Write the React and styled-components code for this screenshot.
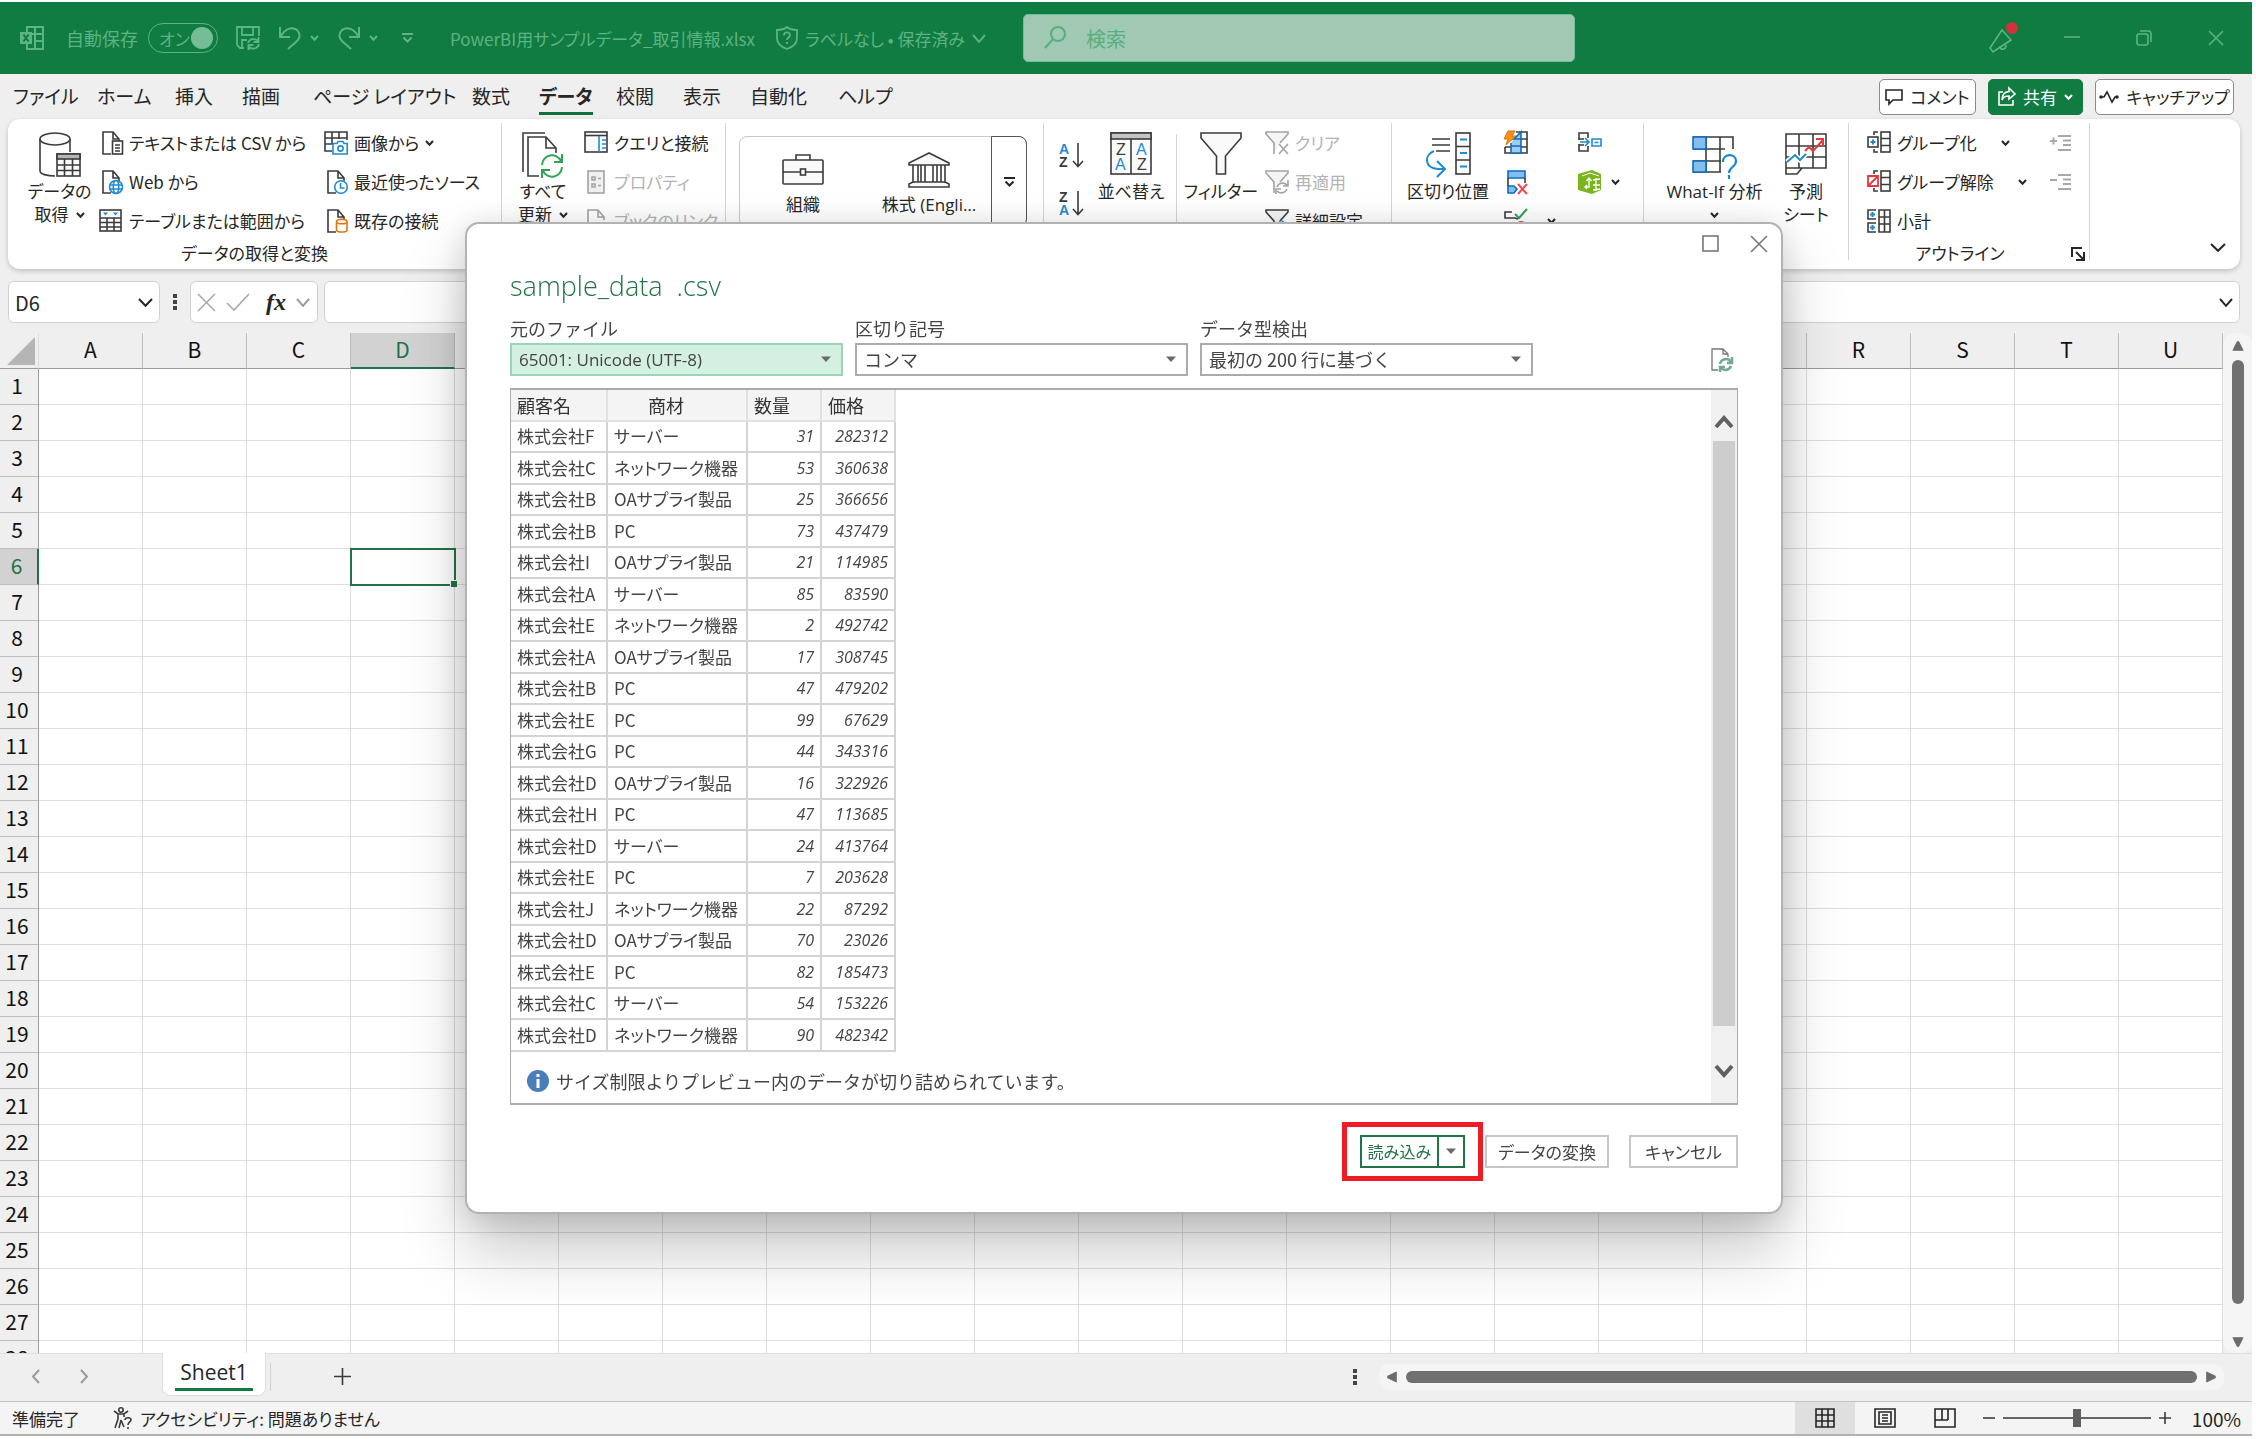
import { useState } from "react";
import styled, { createGlobalStyle, css } from "styled-components";

const green = "#107c41";
const titleInk = "#5cb384";
const ink = "#262626";
const line = "#3b3b3b";
const blue = "#1e8ad2";
const jp = `"Noto Sans CJK JP", "Noto Sans", sans-serif`;
const latin = `"Open Sans", "Noto Sans CJK JP", sans-serif`;

const columns = "ABCDEFGHIJKLMNOPQRSTU".split("");
const rowNumbers = Array.from({ length: 28 }, (_, i) => i + 1);

const previewRows = [
  ["株式会社F", "サーバー", 31, 282312],
  ["株式会社C", "ネットワーク機器", 53, 360638],
  ["株式会社B", "OAサプライ製品", 25, 366656],
  ["株式会社B", "PC", 73, 437479],
  ["株式会社I", "OAサプライ製品", 21, 114985],
  ["株式会社A", "サーバー", 85, 83590],
  ["株式会社E", "ネットワーク機器", 2, 492742],
  ["株式会社A", "OAサプライ製品", 17, 308745],
  ["株式会社B", "PC", 47, 479202],
  ["株式会社E", "PC", 99, 67629],
  ["株式会社G", "PC", 44, 343316],
  ["株式会社D", "OAサプライ製品", 16, 322926],
  ["株式会社H", "PC", 47, 113685],
  ["株式会社D", "サーバー", 24, 413764],
  ["株式会社E", "PC", 7, 203628],
  ["株式会社J", "ネットワーク機器", 22, 87292],
  ["株式会社D", "OAサプライ製品", 70, 23026],
  ["株式会社E", "PC", 82, 185473],
  ["株式会社C", "サーバー", 54, 153226],
  ["株式会社D", "ネットワーク機器", 90, 482342],
];

const GlobalStyle = createGlobalStyle`
  * {
    box-sizing: border-box;
  }
  body {
    margin: 0;
    background: #fff;
    color: ${ink};
    font-family: ${jp};
    font-size: 18px;
    font-feature-settings: "palt";
  }
  button, input, select {
    margin: 0;
    padding: 0;
    border: 0;
    background: none;
    color: inherit;
    font: inherit;
    font-feature-settings: inherit;
  }
  button {
    cursor: pointer;
    white-space: nowrap;
  }
  svg {
    display: block;
    flex: none;
    overflow: visible;
  }
`;

/* ---------- icons ---------- */

const Icon = ({ w = 24, h = 24, color = line, sw = 1.6, children }) => (
  <svg
    width={w}
    height={h}
    viewBox={`0 0 ${w} ${h}`}
    fill="none"
    stroke={color}
    strokeWidth={sw}
    aria-hidden="true"
  >
    {children}
  </svg>
);

const Chevron = ({ w = 9, h = 6, color = ink, sw = 2 }) => (
  <Icon w={w} h={h} color={color} sw={sw}>
    <path d={`M1 1L${w / 2} ${h - 1.2}L${w - 1} 1`} />
  </Icon>
);

const Triangle = ({ dir = "down", color = "#6b6b6b", size = 10 }) => {
  const turn = { down: 0, left: 90, up: 180, right: 270 }[dir];
  return (
    <svg width={size} height={size} viewBox="0 0 10 10" aria-hidden="true">
      <path
        d="M1 1.500H9L5.500 8.500h-1z"
        fill={color}
        stroke={color}
        strokeLinejoin="round"
        transform={`rotate(${turn} 5 5)`}
      />
    </svg>
  );
};

const ExcelIcon = () => (
  <Icon color={titleInk} sw={2}>
    <path d="M7 6V1h16v22H7v-5M15 1v22M7 8h16M15 15h8M7 1" />
    <rect x="0" y="6" width="12" height="12" fill={titleInk} stroke="none" />
    <path d="M3.500 8.500l5 7M8.500 8.500l-5 7" stroke={green} />
  </Icon>
);

const SaveIcon = () => (
  <Icon color={titleInk} sw={1.8}>
    <path d="M8 22H4L1 19V1h22v9M6 1v8h11V1M6 22v-8h5" />
    <path d="M12 17a6 6 0 0 1 10-2M22.500 11v5h-5M23 18a6 6 0 0 1-10 3M12.500 24v-5h5" />
  </Icon>
);

const UndoIcon = ({ flip }) => (
  <Icon color={titleInk} sw={2}>
    <g transform={flip ? "matrix(-1 0 0 1 24 0)" : undefined}>
      <path d="M2 1v10h10M2.500 10.500C7 3 14 0 19 4c4 4 3 8 0 11l-9 8" />
    </g>
  </Icon>
);

const ShieldIcon = () => (
  <Icon w={22} color={titleInk} sw={1.8}>
    <path d="M11 1c3 2.500 6 3 10 3v8c0 5-4 9-10 11C5 21 1 17 1 12V4c4 0 7-.5 10-3z" />
    <path d="M8 9.500c0-4 6-4 6-.5 0 2.500-3 2.500-3 5M11 16v2" />
  </Icon>
);

const SearchIcon = () => (
  <Icon w={22} color="#55b080" sw={2}>
    <circle cx="14" cy="8" r="7" />
    <path d="M9 13L1 22" />
  </Icon>
);

const MegaphoneIcon = () => (
  <Icon w={28} h={32} color={titleInk} sw={1.6}>
    <path d="M16 8L4 26l3 4 18-12zM14 24c0 5 6 4 6-1" />
    <circle cx="26" cy="6" r="6" fill="#d13438" stroke="none" />
  </Icon>
);

const DatabaseIcon = () => (
  <Icon w={42} h={46}>
    <path d="M1 7v32c0 3 7 5 15 5" />
    <path d="M31 7v13" />
    <ellipse cx="16" cy="7" rx="15" ry="6" fill="#fafafa" />
    <rect x="18" y="22" width="23" height="22" fill="#fafafa" />
    <rect x="18" y="22" width="23" height="5" fill="#b5b5b5" />
    <path d="M18 33h23M18 38.500h23M25.500 27v17M33.500 27v17" />
  </Icon>
);

const PageShape = ({ color = line }) => (
  <path d="M9 23H1V1h10l6 7v3M11 1v7h6" stroke={color} />
);

const TextFileIcon = () => (
  <Icon>
    <g transform="translate(3)">
      <PageShape />
      <rect x="10.500" y="10" width="10" height="13" fill="#fff" />
      <path d="M13 14h5M13 17h5M13 20h5" />
    </g>
  </Icon>
);

const WebFileIcon = () => (
  <Icon>
    <g transform="translate(3)">
      <PageShape />
      <g stroke={blue}>
        <circle cx="14" cy="17" r="6.500" fill="#fff" />
        <ellipse cx="14" cy="17" rx="2.700" ry="6.500" />
        <path d="M8 15h12M8 19h12" />
      </g>
    </g>
  </Icon>
);

const TableIcon = () => (
  <Icon>
    <rect x="1" y="1" width="21" height="21" fill="#fafafa" />
    <path d="M1 9h21M1 13.500h21M1 18h21M8 9v13M15 9v13" />
    <path d="M4 3.500h5L6.500 6.500zM14 3.500h5l-2.500 3z" fill={blue} stroke="none" />
  </Icon>
);

const PictureIcon = () => (
  <Icon>
    <path d="M8 20H1V1h22v8M1 7h22M1 13h8M8 1v12M15 1v7" />
    <path d="M9 12.500h4l1-2h5l1 2h3.200V23H9z" fill="#fff" stroke={blue} />
    <circle cx="16.500" cy="17.500" r="2.600" stroke={blue} />
  </Icon>
);

const RecentIcon = () => (
  <Icon>
    <g transform="translate(3)">
      <PageShape />
      <g stroke={blue}>
        <circle cx="14" cy="17" r="6.300" fill="#fff" />
        <path d="M13.500 13v5h4" />
      </g>
    </g>
  </Icon>
);

const ConnectionIcon = () => (
  <Icon>
    <g transform="translate(3)">
      <PageShape />
      <g stroke="#e2740c" fill="#fff">
        <path d="M9.500 12.500v8.500c0 2.700 10.500 2.700 10.500 0v-8.500" />
        <ellipse cx="14.800" cy="12.500" rx="5.200" ry="2.300" />
      </g>
    </g>
  </Icon>
);

const RefreshAllIcon = () => (
  <Icon w={42} h={46}>
    <path d="M1 40V1h22M17 44H6V5h18l10 11v5M24 5v11h10" />
    <g stroke="#31a354" strokeWidth="2">
      <path d="M20 33a10 10 0 0 1 19-4M40 22v8h-8M40 35a10 10 0 0 1-19 4M20 46v-8h8" />
    </g>
  </Icon>
);

const QueriesIcon = () => (
  <Icon>
    <rect x="1" y="1" width="22" height="20" fill="#fafafa" />
    <path d="M1 4.500h22" />
    <path d="M15 5v16M18 9h4M18 13h4M18 17h4" stroke={blue} />
  </Icon>
);

const PropertiesIcon = () => (
  <Icon color="#a3a3a3">
    <rect x="4" y="1" width="16" height="22" fill="#f0f0f0" />
    <path d="M8 7h3v3H8zM8 14h3v3H8zM14 8.500h3M14 15.500h3" />
  </Icon>
);

const LinkFileIcon = () => (
  <Icon color="#a3a3a3">
    <g transform="translate(3)">
      <PageShape color="#a3a3a3" />
      <rect x="6" y="14" width="14" height="7" rx="3.500" fill="#fff" />
    </g>
  </Icon>
);

const BriefcaseIcon = () => (
  <Icon w={42} h={36}>
    <rect x="1" y="8" width="40" height="24" rx="1" fill="#fafafa" />
    <path d="M14 8V3h14v5M1 20h18M24 20h17" />
    <rect x="18.500" y="17" width="5" height="6" />
  </Icon>
);

const BankIcon = () => (
  <Icon w={42} h={36}>
    <path d="M21 1L1 11v2h40v-2zM5 13v18M37 13v18M1 35v-3l4-2h32l4 2v3z" fill="#fafafa" />
    <path d="M13 13v17M17 13v17M25 13v17M29 13v17M10 13v17M33 13v17" />
  </Icon>
);

const SvgText = ({ x, y, size = 17, weight = 400, fill = line, children }) => (
  <text
    x={x}
    y={y}
    fontSize={size}
    fontFamily="Liberation Sans, sans-serif"
    fontWeight={weight}
    fill={fill}
    stroke="none"
  >
    {children}
  </text>
);

const SortIcon = ({ down }) => (
  <Icon w={26} h={28}>
    <SvgText x={1} y={13} size={14} weight={700} fill={down ? line : blue}>{down ? "Z" : "A"}</SvgText>
    <SvgText x={1} y={26} size={14} weight={700} fill={down ? blue : line}>{down ? "A" : "Z"}</SvgText>
    <path d="M20 2v23M15 20l5 5.500 5-5.500" />
  </Icon>
);

const SortDialogIcon = () => (
  <Icon w={42} h={46}>
    <rect x="1" y="1" width="40" height="41" fill="#fafafa" />
    <rect x="1" y="1" width="40" height="6" fill="#c4c4c4" />
    <path d="M21 7v35" />
    <SvgText x={6} y={23} size={16}>Z</SvgText>
    <SvgText x={5} y={38} size={16} fill={blue}>A</SvgText>
    <SvgText x={26} y={23} size={16} fill={blue}>A</SvgText>
    <SvgText x={27} y={38} size={16}>Z</SvgText>
  </Icon>
);

const FilterIcon = () => (
  <Icon w={42} h={46}>
    <path d="M1 1h40v5L25.500 24v18h-9V24L1 6z" fill="#fafafa" />
  </Icon>
);

const SmallFilter = ({ color = "#a3a3a3", children }) => (
  <Icon color={color}>
    <path d="M9 23V12L1 3V1h22v2l-8 9" fill="#f5f5f5" />
    {children}
  </Icon>
);

const TextColumnsIcon = () => (
  <Icon w={46} h={46}>
    <path d="M7 7h18M7 13h18M11 19h14" />
    <rect x="31" y="1" width="14" height="41" fill="#fafafa" />
    <path d="M31 14.500h14M31 28h14" />
    <g stroke={blue} strokeWidth="2">
      <path d="M35 7.500h7M35 21h7M35 34.500h7M9 19c-10 4-10 17 4 18h6M12 29l8 8-8 8" />
    </g>
  </Icon>
);

const FlashFillIcon = () => (
  <Icon>
    <path d="M12 1h11v21H1v-6M1 16h22M12 8h11" />
    <path d="M10 8l7-7v21H7V12" fill="#9fcbee" stroke="#0f6cbd" />
    <path d="M7 15h10M7 8h10" stroke="#0f6cbd" />
    <path d="M4 0h7L8 5h4L2 14l2-6H0z" fill="#f7901e" stroke="#d9730d" strokeWidth="1" />
  </Icon>
);

const DuplicatesIcon = () => (
  <Icon>
    <path d="M4 1h17v7H4zM4 16h6l3 3-3 4H4z" fill="#83beec" stroke="#0f6cbd" />
    <path d="M4 8v8M21 8v5" />
    <path d="M14 14l9 10M23 14l-9 10" stroke="#f0484c" strokeWidth="2" />
  </Icon>
);

const ValidationIcon = () => (
  <Icon>
    <path d="M8 3H1v6h10l3 1M9 16H1v6h7" />
    <path d="M11 5l4 4 8-9" stroke="#31a354" strokeWidth="2" />
    <circle cx="17" cy="18" r="5" stroke="#e8383d" strokeWidth="2" />
  </Icon>
);

const ConsolidateIcon = () => (
  <Icon>
    <path d="M1 9V2h9v5M1 13v7h9v-5M1 8h5M1 14h5" />
    <path d="M2 11h9M7 7l4 4-4 4M14 8h9v7h-9zM16.500 11.500h4" stroke={blue} />
  </Icon>
);

const DataModelIcon = () => (
  <Icon>
    <path d="M0 4L14 0l9 4v16l-9 4-14-4z" fill="#7ab51d" stroke="none" />
    <path d="M4 6l8-3 9 3" stroke="#fff" strokeWidth="1" />
    <path d="M11 9v8H7M8.500 11L11 8l2.500 3M9 15l-2 2 2 2M15 10l7-1M15 15h7M15 20l7-1M18 8v13" stroke="#fff" strokeWidth="1.300" />
  </Icon>
);

const WhatIfIcon = () => (
  <Icon w={46} h={46}>
    <path d="M1 5h40v12M1 17h32M1 29h28M14 5v35M28 5v35M1 40h28" />
    <path d="M1 5h13v12H1zM1 29h13v11H1z" fill="#83beec" stroke="#0f6cbd" />
    <path d="M31 30c0-9 13-9 13-1 0 6-7 6-7 12M37 43v4" stroke={blue} strokeWidth="2.200" />
  </Icon>
);

const ForecastIcon = () => (
  <Icon w={42} h={46}>
    <path d="M1 2h40v34H17l-5 6H1zM1 14h40M1 25h40M1 36h16M14 2v34M28 2v34" />
    <path d="M2 30l8-7 5 5 6-6" stroke="#fff" strokeWidth="5" />
    <path d="M2 30l8-7 5 5 6-6" stroke={blue} strokeWidth="2" />
    <path d="M20 19l4-4 4 4L38 8M31 7h7v8" stroke="#e8383d" strokeWidth="2" />
  </Icon>
);

const GroupIcon = ({ kind }) => (
  <Icon>
    <rect x="14" y="1" width="9" height="20" />
    <path d="M14 7.500h9M14 14.500h9M11 1H7v3M11 21H7v-3" />
    {kind === "group" ? (
      <>
        <rect x="1" y="6" width="10" height="10" />
        <path d="M3.500 11h5M6 8.500v5" stroke={blue} strokeWidth="2" />
      </>
    ) : (
      <path d="M1 6h10v10H1zM1 16L11 6" stroke="#e8383d" strokeWidth="1.800" />
    )}
  </Icon>
);

const SubtotalIcon = () => (
  <Icon>
    <path d="M12 1h11v22H12zM12 8h11M12 15h11M17.500 1v22M9 1H1v9h8M9 14H1v9h8" />
    <path d="M3 5.500h5M5.500 3v5M3 18.500h5M5.500 16v5" stroke={blue} strokeWidth="2" />
  </Icon>
);

const DetailIcon = ({ minus }) => (
  <Icon color="#a8a8a8" sw={2} h={18}>
    <path d="M9 2h13M14 6.500h8M14 11h8M9 16h13M1 7h7" />
    {!minus && <path d="M4.500 3.500v7" />}
  </Icon>
);

const LauncherIcon = () => (
  <Icon w={14} h={14} color={ink} sw={2}>
    <path d="M1 10V1h10M13 5v8H5M5 5l7 7" />
  </Icon>
);

const CommentIcon = () => (
  <Icon w={18} h={18} color={ink}>
    <path d="M1 2h16v10H8l-4 4v-4H1z" />
  </Icon>
);

const ShareIcon = () => (
  <Icon w={18} h={20} color="#fff">
    <path d="M5 5H1v13h14v-5M11 1l6 6-6 5V9c-4 0-6 1-7 4 0-5 2-8 7-8.500z" />
  </Icon>
);

const CatchUpIcon = () => (
  <Icon w={20} h={14} color={ink}>
    <path d="M2 7h3l3-5 5 10 3-5h2" />
    <circle cx="2" cy="7" r="1" fill={ink} />
    <circle cx="18" cy="7" r="1" fill={ink} />
  </Icon>
);

const CrossIcon = ({ size = 16, color, sw = 1.6 }) => (
  <Icon w={size} h={size} color={color} sw={sw}>
    <path d={`M1 1L${size - 1} ${size - 1}M${size - 1} 1L1 ${size - 1}`} />
  </Icon>
);

const RefreshFileIcon = () => (
  <Icon w={22} color="#777" sw={1.3}>
    <path d="M7 22H1V1h11l5 5v3M12 1v5h5" />
    <g stroke="#6fa893" strokeWidth="2.500">
      <path d="M9 16a6 6 0 0 1 11-2M21 9v6h-5M20 18a6 6 0 0 1-10 2M9 24v-5h5" />
    </g>
  </Icon>
);

const AccessibilityIcon = () => (
  <Icon w={22} h={22}>
    <circle cx="9" cy="3" r="2.200" />
    <path d="M2 4l4 3h6l4-3M6 7v5L3 21M12 7v3M9 13l-2 8M13 13c0-3 6-3 6 0 0 2-3 2-3 5M16 20v2M9 13l3 7" />
  </Icon>
);

/* ---------- title bar ---------- */

const Window = styled.div`
  display: flex;
  flex-direction: column;
  height: 100vh;
  padding: 2px 4px 3px 0;
  overflow: hidden;
`;

const TitleBar = styled.header`
  display: flex;
  flex: none;
  align-items: center;
  height: 72px;
  background: ${green};
  color: ${titleInk};
`;

const TitleLeft = styled.div`
  display: flex;
  align-items: center;
  flex: 0 1 1023px;
  padding-left: 20px;
  white-space: nowrap;
`;

const AutoSave = styled.label`
  display: flex;
  align-items: center;
  gap: 10px;
  margin: 0 18px 0 22px;
`;

const Switch = styled.span`
  display: flex;
  align-items: center;
  justify-content: space-between;
  width: 70px;
  height: 30px;
  padding: 0 4px 0 10px;
  border: 1px solid ${titleInk};
  border-radius: 15px;
  font-size: 17px;

  &::after {
    content: "";
    width: 22px;
    height: 22px;
    border-radius: 50%;
    background: #74bd96;
  }
`;

const HiddenCheck = styled.input`
  position: absolute;
  opacity: 0;
`;

const TitleButton = styled.button`
  display: flex;
  align-items: center;
  gap: 8px;
  margin-right: ${(props) => props.$gap || 18}px;
`;

const FileName = styled.span`
  width: 326px;
  font-size: 17px;
`;

const SavedState = styled.button`
  display: flex;
  align-items: center;
  gap: 7px;
  font-size: 17px;
`;

const SearchBox = styled.label`
  display: flex;
  align-items: center;
  gap: 20px;
  flex: 0 1 552px;
  height: 48px;
  padding: 0 20px;
  border: 1px solid #6fc095;
  border-radius: 5px;
  background: #a0c8b2;
  color: #55b080;
  font-size: 20px;

  input {
    flex: 1;
    outline: 0;
  }
  input::placeholder {
    color: inherit;
    opacity: 1;
  }
`;

const WindowButtons = styled.div`
  display: flex;
  flex: 1;
  justify-content: flex-end;

  button {
    display: flex;
    align-items: center;
    justify-content: center;
    width: 72px;
    height: 72px;
  }
`;

const TitleBarView = () => {
  const [autoSave, setAutoSave] = useState(true);
  return (
    <TitleBar>
      <TitleLeft>
        <ExcelIcon />
        <AutoSave>
          自動保存
          <HiddenCheck type="checkbox" checked={autoSave} onChange={() => setAutoSave(!autoSave)} />
          <Switch>{autoSave ? "オン" : "オフ"}</Switch>
        </AutoSave>
        <TitleButton aria-label="上書き保存">
          <SaveIcon />
        </TitleButton>
        <TitleButton aria-label="元に戻す">
          <UndoIcon />
          <Chevron color={titleInk} />
        </TitleButton>
        <TitleButton $gap={24} aria-label="やり直し">
          <UndoIcon flip />
          <Chevron color={titleInk} />
        </TitleButton>
        <TitleButton $gap={37} aria-label="カスタマイズ">
          <Icon w={11} h={10} color={titleInk} sw={2}>
            <path d="M0 1h11M1.500 4.500l4 4 4-4" />
          </Icon>
        </TitleButton>
        <FileName>PowerBI用サンプルデータ_取引情報.xlsx</FileName>
        <SavedState>
          <ShieldIcon />
          ラベルなし • 保存済み
          <Chevron w={14} h={9} color={titleInk} />
        </SavedState>
      </TitleLeft>
      <SearchBox>
        <SearchIcon />
        <input type="search" placeholder="検索" />
      </SearchBox>
      <WindowButtons>
        <button aria-label="新機能">
          <MegaphoneIcon />
        </button>
        <button aria-label="最小化">
          <Icon w={16} h={16} color={titleInk}>
            <path d="M0 7h16" />
          </Icon>
        </button>
        <button aria-label="元のサイズに戻す">
          <Icon w={16} h={16} color={titleInk}>
            <rect x="1" y="4" width="11" height="11" rx="2" />
            <path d="M4 1h8a3 3 0 0 1 3 3v8" />
          </Icon>
        </button>
        <button aria-label="閉じる">
          <CrossIcon color={titleInk} />
        </button>
      </WindowButtons>
    </TitleBar>
  );
};

/* ---------- tabs ---------- */

const TabRow = styled.nav`
  display: flex;
  flex: none;
  align-items: center;
  height: 45px;
  padding: 0 18px 0 13px;
  background: #efefef;
`;

const TabList = styled.div`
  display: grid;
  grid-template-columns: 84px 78px 67px 71px 159px 67px 77px 67px 67px 88px 60px;
  flex: 1;
`;

const Tab = styled.button`
  justify-self: start;
  height: 36px;
  border-bottom: 3px solid transparent;
  font-size: 19px;
  line-height: 33px;
  ${(props) =>
    props.$active &&
    css`
      border-color: #0f703b;
      font-weight: 700;
    `}
`;

const TabActions = styled.div`
  display: flex;
  gap: 12px;
`;

const ActionButton = styled.button`
  display: flex;
  align-items: center;
  justify-content: center;
  gap: 7px;
  width: ${(props) => props.$width}px;
  height: 36px;
  border: 1px solid ${(props) => (props.$primary ? green : "#8a8a8a")};
  border-radius: 5px;
  background: ${(props) => (props.$primary ? green : "#fff")};
  color: ${(props) => (props.$primary ? "#fff" : ink)};
  font-size: 17px;
`;

const tabs = ["ファイル", "ホーム", "挿入", "描画", "ページ レイアウト", "数式", "データ", "校閲", "表示", "自動化", "ヘルプ"];

const TabRowView = () => (
  <TabRow>
    <TabList>
      {tabs.map((tab) => (
        <Tab key={tab} $active={tab === "データ"}>
          {tab}
        </Tab>
      ))}
    </TabList>
    <TabActions>
      <ActionButton $width={97}>
        <CommentIcon />
        コメント
      </ActionButton>
      <ActionButton $width={95} $primary>
        <ShareIcon />
        共有
        <Chevron color="#fff" />
      </ActionButton>
      <ActionButton $width={139}>
        <CatchUpIcon />
        キャッチアップ
      </ActionButton>
    </TabActions>
  </TabRow>
);

/* ---------- ribbon ---------- */

const RibbonArea = styled.div`
  flex: none;
  padding: 0 12px 12px 8px;
  background: #efefef;
`;

const Ribbon = styled.div`
  display: flex;
  height: 150px;
  padding: 4px 0 9px;
  border-radius: 12px;
  background: #fff;
  box-shadow: 0 2px 5px rgba(0, 0, 0, 0.2);
`;

const Group = styled.section`
  display: flex;
  flex: none;
  flex-direction: column;
  width: ${(props) => props.$width}px;
  border-right: 1px solid #d4d4d4;
`;

const GroupBody = styled.div`
  display: flex;
  height: 117px;
  padding-left: ${(props) => props.$indent || 0}px;
`;

const GroupLabel = styled.div`
  display: flex;
  align-items: center;
  justify-content: center;
  height: 27px;
  font-size: 17px;

  button {
    margin: 2px 4px 0 0;
  }
  span {
    flex: 1;
    text-align: center;
  }
`;

const LargeButton = styled.button`
  display: flex;
  flex: none;
  flex-direction: column;
  align-items: center;
  width: ${(props) => props.$width}px;
  padding-top: 9px;
  font-family: ${latin};
  font-size: 17px;
  line-height: 23px;

  > svg {
    margin-bottom: 2px;
  }
  span {
    display: flex;
    align-items: center;
    gap: 7px;
    height: 23px;
  }
`;

const ButtonColumn = styled.div`
  display: flex;
  flex: none;
  flex-direction: column;
  width: ${(props) => props.$width}px;
`;

const SortColumn = styled(ButtonColumn)`
  align-items: center;
  gap: 20px;
  padding-top: 18px;
`;

const SmallButton = styled.button`
  display: flex;
  align-items: center;
  gap: ${(props) => props.$gap || 6}px;
  height: 39px;
  color: ${(props) => (props.disabled ? "#b3b3b3" : ink)};
  font-size: 17px;
`;

const OutlineButton = styled(SmallButton)`
  > svg:last-child:not(:first-child) {
    margin-left: 18px;
  }
`;

const Divider = styled.div`
  width: 1px;
  margin: 11px 0 0 12px;
  background: #d4d4d4;
`;

const Gallery = styled.div`
  display: flex;
  flex: 1;
  height: 91px;
  margin: 13px 16px 0 13px;
  border: 1px solid #c8c8c8;
  border-radius: 8px;
`;

const GalleryItem = styled.button`
  display: flex;
  flex: 1;
  flex-direction: column;
  align-items: center;
  gap: 4px;
  padding-top: 15px;
  font-family: ${latin};
  font-size: 17px;
  line-height: 26px;
`;

const GalleryMore = styled.button`
  display: flex;
  align-items: center;
  justify-content: center;
  width: 36px;
  margin: -1px;
  border: 1px solid #555;
  border-radius: 0 8px 8px 0;
`;

const CollapseButton = styled.button`
  align-self: flex-end;
  margin: 0 14px 8px auto;
`;

const RibbonView = () => (
  <RibbonArea>
    <Ribbon>
      <Group $width={494}>
        <GroupBody $indent={12}>
          <LargeButton $width={79}>
            <DatabaseIcon />
            <span>データの</span>
            <span>
              取得 <Chevron />
            </span>
          </LargeButton>
          <ButtonColumn $width={225}>
            <SmallButton>
              <TextFileIcon />
              テキストまたは CSV から
            </SmallButton>
            <SmallButton>
              <WebFileIcon />
              Web から
            </SmallButton>
            <SmallButton>
              <TableIcon />
              テーブルまたは範囲から
            </SmallButton>
          </ButtonColumn>
          <ButtonColumn $width={170}>
            <SmallButton>
              <PictureIcon />
              画像から
              <Chevron />
            </SmallButton>
            <SmallButton>
              <RecentIcon />
              最近使ったソース
            </SmallButton>
            <SmallButton>
              <ConnectionIcon />
              既存の接続
            </SmallButton>
          </ButtonColumn>
        </GroupBody>
        <GroupLabel>データの取得と変換</GroupLabel>
      </Group>

      <Group $width={224}>
        <GroupBody>
          <LargeButton $width={82}>
            <RefreshAllIcon />
            <span>すべて</span>
            <span>
              更新 <Chevron />
            </span>
          </LargeButton>
          <ButtonColumn $width={140}>
            <SmallButton>
              <QueriesIcon />
              クエリと接続
            </SmallButton>
            <SmallButton disabled>
              <PropertiesIcon />
              プロパティ
            </SmallButton>
            <SmallButton disabled>
              <LinkFileIcon />
              ブックのリンク
            </SmallButton>
          </ButtonColumn>
        </GroupBody>
      </Group>

      <Group $width={318}>
        <GroupBody>
          <Gallery>
            <GalleryItem>
              <BriefcaseIcon />
              組織
            </GalleryItem>
            <GalleryItem>
              <BankIcon />
              株式 (Engli…
            </GalleryItem>
            <GalleryMore aria-label="その他">
              <Icon w={11} h={10} color={ink} sw={2}>
                <path d="M0 1h11M1.500 4.500l4 4 4-4" />
              </Icon>
            </GalleryMore>
          </Gallery>
        </GroupBody>
      </Group>

      <Group $width={348}>
        <GroupBody>
          <SortColumn $width={54}>
            <button aria-label="昇順">
              <SortIcon />
            </button>
            <button aria-label="降順">
              <SortIcon down />
            </button>
          </SortColumn>
          <LargeButton $width={66}>
            <SortDialogIcon />
            <span>並べ替え</span>
          </LargeButton>
          <Divider />
          <LargeButton $width={88}>
            <FilterIcon />
            <span>フィルター</span>
          </LargeButton>
          <ButtonColumn $width={126}>
            <SmallButton disabled>
              <SmallFilter>
                <path d="M14 13l9 10M23 13l-9 10" />
              </SmallFilter>
              クリア
            </SmallButton>
            <SmallButton disabled>
              <SmallFilter>
                <path d="M12 17a6 6 0 0 1 10-2M23 10v6h-5M22 19a6 6 0 0 1-10 2M11 24v-5h5" />
              </SmallFilter>
              再適用
            </SmallButton>
            <SmallButton>
              <SmallFilter color={line}>
                <circle cx="17" cy="17" r="4" stroke={blue} strokeWidth="3" strokeDasharray="2 1" />
              </SmallFilter>
              詳細設定
            </SmallButton>
          </ButtonColumn>
        </GroupBody>
      </Group>

      <Group $width={252}>
        <GroupBody>
          <LargeButton $width={112}>
            <TextColumnsIcon />
            <span>区切り位置</span>
          </LargeButton>
          <ButtonColumn $width={74}>
            <SmallButton aria-label="フラッシュ フィル">
              <FlashFillIcon />
            </SmallButton>
            <SmallButton aria-label="重複の削除">
              <DuplicatesIcon />
            </SmallButton>
            <SmallButton $gap={19} aria-label="データの入力規則">
              <ValidationIcon />
              <Chevron />
            </SmallButton>
          </ButtonColumn>
          <ButtonColumn $width={60}>
            <SmallButton aria-label="統合">
              <ConsolidateIcon />
            </SmallButton>
            <SmallButton $gap={9} aria-label="データ モデル">
              <DataModelIcon />
              <Chevron />
            </SmallButton>
          </ButtonColumn>
        </GroupBody>
      </Group>

      <Group $width={205}>
        <GroupBody $indent={6}>
          <LargeButton $width={129}>
            <WhatIfIcon />
            <span>What-If 分析</span>
            <span>
              <Chevron />
            </span>
          </LargeButton>
          <LargeButton $width={54}>
            <ForecastIcon />
            <span>予測</span>
            <span>シート</span>
          </LargeButton>
        </GroupBody>
      </Group>

      <Group $width={241}>
        <GroupBody $indent={18}>
          <ButtonColumn $width={182}>
            <OutlineButton>
              <GroupIcon kind="group" />
              グループ化
              <Chevron />
            </OutlineButton>
            <OutlineButton>
              <GroupIcon kind="ungroup" />
              グループ解除
              <Chevron />
            </OutlineButton>
            <OutlineButton>
              <SubtotalIcon />
              小計
            </OutlineButton>
          </ButtonColumn>
          <ButtonColumn $width={24}>
            <SmallButton disabled aria-label="詳細データの表示">
              <DetailIcon />
            </SmallButton>
            <SmallButton disabled aria-label="詳細を表示しない">
              <DetailIcon minus />
            </SmallButton>
          </ButtonColumn>
        </GroupBody>
        <GroupLabel>
          <span>アウトライン</span>
          <button aria-label="アウトラインの設定">
            <LauncherIcon />
          </button>
        </GroupLabel>
      </Group>

      <CollapseButton aria-label="リボンを折りたたむ">
        <Chevron w={16} h={9} />
      </CollapseButton>
    </Ribbon>
  </RibbonArea>
);

/* ---------- formula bar ---------- */

const FormulaBar = styled.div`
  display: flex;
  flex: none;
  height: 52px;
  padding: 0 12px 10px 8px;
  background: #efefef;
`;

const FormulaField = styled.div`
  display: flex;
  align-items: center;
  flex: ${(props) => (props.$width ? "none" : 1)};
  width: ${(props) => props.$width}px;
  gap: ${(props) => props.$gap || 0}px;
  padding: 0 6px;
  border: 1px solid #d2d2d2;
  border-radius: 6px;
  background: #fff;

  input {
    flex: 1;
    min-width: 0;
    outline: 0;
    font-size: 20px;
  }
`;

const Dots = styled.div`
  display: flex;
  align-items: center;
  justify-content: center;
  width: 30px;
`;

const FunctionMark = styled.button`
  margin-left: 6px;
  font: italic 700 24px "Liberation Serif", serif;
`;

const DotsIcon = () => (
  <svg width="4" height="16" viewBox="0 0 4 16" fill="#444" aria-hidden="true">
    <path d="M0 0h4v4H0zM0 6h4v4H0zM0 12h4v4H0z" />
  </svg>
);

const Gap = styled.div`
  width: 6px;
`;

const FormulaBarView = () => (
  <FormulaBar>
    <FormulaField $width={152}>
      <input aria-label="名前ボックス" defaultValue="D6" />
      <Chevron w={15} h={9} />
    </FormulaField>
    <Dots>
      <DotsIcon />
    </Dots>
    <FormulaField $width={128} $gap={10}>
      <button aria-label="キャンセル">
        <CrossIcon size={19} color="#a9a9a9" />
      </button>
      <button aria-label="入力">
        <Icon w={24} h={18} color="#a9a9a9">
          <path d="M1 10l7 7L23 1" />
        </Icon>
      </button>
      <FunctionMark>fx</FunctionMark>
      <Chevron w={14} h={9} color="#9a9a9a" />
    </FormulaField>
    <Gap />
    <FormulaField>
      <input aria-label="数式バー" />
      <Chevron w={14} h={9} />
    </FormulaField>
  </FormulaBar>
);

/* ---------- sheet ---------- */

const SheetArea = styled.div`
  display: flex;
  flex: 1;
  min-height: 0;
  background: #efefef;
`;

const SheetScroll = styled.div`
  flex: 1;
  overflow: hidden;
  background: #fff;
`;

const SheetTable = styled.table`
  width: 2223px;
  table-layout: fixed;
  border-collapse: separate;
  border-spacing: 0;

  td,
  th {
    height: 36px;
    padding: 0;
    border-right: 1px solid #dedede;
    border-bottom: 1px solid #dedede;
  }
`;

const headSelected = css`
  background: #d2d2d2;
  color: #217346;
`;

const ColumnHead = styled.th`
  && {
    padding-bottom: 3px;
    border-right-color: #bdbdbd;
    border-bottom: ${(props) => (props.$selected ? "2px solid #217346" : "1px solid #9b9b9b")};
  }
  background: #efefef;
  color: #111;
  font-size: 21px;
  font-weight: 400;
  line-height: 30px;
  ${(props) => props.$selected && headSelected}
`;

const CornerHead = styled.th`
  width: 39px;
  background: #efefef;

  svg {
    margin-left: 7px;
  }
  && {
    border-bottom-color: #9b9b9b;
  }
`;

const RowHead = styled.th`
  && {
    padding: 0 4px 4px 0;
    border-right: ${(props) => (props.$selected ? "2px solid #217346" : "1px solid #9b9b9b")};
    border-bottom-color: #bdbdbd;
  }
  background: #efefef;
  color: #111;
  font-size: 21px;
  font-weight: 400;
  line-height: 30px;
  ${(props) => props.$selected && headSelected}
`;

const Cell = styled.td`
  ${(props) =>
    props.$selected &&
    css`
      position: relative;
      outline: 2px solid #217346;
      outline-offset: -1px;

      &::after {
        content: "";
        position: absolute;
        right: -3px;
        bottom: -3px;
        width: 6px;
        height: 6px;
        border: 1px solid #fff;
        border-width: 1px 0 0 1px;
        background: #217346;
      }
    `}
`;

const VerticalScroll = styled.div`
  display: flex;
  flex-direction: column;
  align-items: center;
  flex: none;
  gap: 8px;
  width: 29px;
  padding: 7px 0 5px;
  border-radius: 12px;
  background: #f5f5f5;
`;

const ScrollThumb = styled.div`
  flex: 1;
  align-self: ${(props) => (props.$vertical ? "center" : "auto")};
  width: ${(props) => (props.$vertical ? "12px" : "auto")};
  height: ${(props) => (props.$vertical ? "auto" : "12px")};
  margin-bottom: ${(props) => (props.$vertical ? "24px" : 0)};
  border-radius: 6px;
  background: #707070;
`;

const SheetView = () => (
  <SheetArea>
    <SheetScroll>
      <SheetTable>
        <thead>
          <tr>
            <CornerHead>
              <svg width="28" height="28" viewBox="0 0 28 28" aria-hidden="true">
                <path d="M28 0v28H0z" fill="#b5b5b5" />
              </svg>
            </CornerHead>
            {columns.map((name) => (
              <ColumnHead key={name} $selected={name === "D"}>
                {name}
              </ColumnHead>
            ))}
          </tr>
        </thead>
        <tbody>
          {rowNumbers.map((row) => (
            <tr key={row}>
              <RowHead $selected={row === 6}>{row}</RowHead>
              {columns.map((name) => (
                <Cell key={name} $selected={row === 6 && name === "D"} />
              ))}
            </tr>
          ))}
        </tbody>
      </SheetTable>
    </SheetScroll>
    <VerticalScroll>
      <Triangle dir="up" size={12} />
      <ScrollThumb $vertical />
      <Triangle size={12} />
    </VerticalScroll>
  </SheetArea>
);

/* ---------- sheet tabs and status bar ---------- */

const SheetTabs = styled.div`
  display: flex;
  flex: none;
  align-items: center;
  height: 48px;
  padding: 0 28px 2px 0;
  border-top: 1px solid #dedede;
  background: #efefef;
`;

const SheetNav = styled.div`
  display: flex;
  gap: 40px;
  width: 162px;
  padding-left: 31px;
`;

const SheetTab = styled.button`
  align-self: flex-start;
  width: 104px;
  height: 43px;
  margin-top: -1px;
  padding: 0 12px;
  border: 1px solid #dedede;
  border-top: 0;
  border-radius: 0 0 8px 8px;
  background: #fff;
  font-family: ${latin};
  font-size: 21px;

  span {
    display: block;
    height: 36px;
    margin-bottom: 2px;
    border-bottom: 3px solid ${green};
    line-height: 34px;
  }
`;

const AddSheet = styled.button`
  margin-left: 4px;
  padding-left: 63px;
  border-left: 1px solid #cfcfcf;
  height: 28px;
`;

const SheetSpacer = styled.div`
  flex: 1;
`;

const HorizontalScroll = styled.div`
  display: flex;
  align-items: center;
  gap: 8px;
  width: 38%;
  height: 26px;
  margin-left: 22px;
  padding: 0 7px;
  border-radius: 10px;
  background: #f5f5f5;
`;

const StatusBar = styled.footer`
  display: flex;
  flex: none;
  align-items: center;
  height: 35px;
  padding: 0 11px 0 12px;
  border-top: 1px solid #c4c4c4;
  border-bottom: 2px solid #b3b1ae;
  background: #f4f4f4;
  font-size: 17px;
`;

const AccessibilityButton = styled.button`
  display: flex;
  align-items: center;
  gap: 6px;
  margin: 0 auto 0 32px;
`;

const ViewButtons = styled.div`
  display: flex;
  margin-right: 8px;
`;

const ViewButton = styled.button`
  display: flex;
  align-items: center;
  justify-content: center;
  width: 60px;
  height: 32px;
  background: ${(props) => (props.$active ? "#dfdfdf" : "transparent")};
`;

const ZoomSlider = styled.input`
  appearance: none;
  width: 148px;
  height: 18px;
  margin: 0 8px;
  background: linear-gradient(#666, #666) center / 100% 2px no-repeat;

  &::-webkit-slider-thumb {
    appearance: none;
    width: 8px;
    height: 18px;
    background: #606060;
  }
`;

const ZoomValue = styled.span`
  width: 70px;
  text-align: right;
  font-size: 19px;
`;

const BottomView = () => (
  <>
    <SheetTabs>
      <SheetNav>
        <button aria-label="前のシート">
          <Icon w={9} h={15} color="#9a9a9a" sw={2}>
            <path d="M8 1L2 7.500 8 14" />
          </Icon>
        </button>
        <button aria-label="次のシート">
          <Icon w={9} h={15} color="#9a9a9a" sw={2}>
            <path d="M1 1l6 6.500L1 14" />
          </Icon>
        </button>
      </SheetNav>
      <SheetTab>
        <span>Sheet1</span>
      </SheetTab>
      <AddSheet aria-label="新しいシート">
        <Icon w={17} h={17}>
          <path d="M8.500 0v17M0 8.500h17" />
        </Icon>
      </AddSheet>
      <SheetSpacer />
      <DotsIcon />
      <HorizontalScroll>
        <Triangle dir="left" size={12} />
        <ScrollThumb />
        <Triangle dir="right" size={12} />
      </HorizontalScroll>
    </SheetTabs>
    <StatusBar>
      準備完了
      <AccessibilityButton>
        <AccessibilityIcon />
        アクセシビリティ: 問題ありません
      </AccessibilityButton>
      <ViewButtons>
        <ViewButton $active aria-label="標準">
          <Icon w={20} h={20} color={ink}>
            <path d="M1 1h18v18H1zM1 7h18M1 13h18M7 1v18M13 1v18" />
          </Icon>
        </ViewButton>
        <ViewButton aria-label="ページ レイアウト">
          <Icon w={22} h={20} color={ink}>
            <path d="M1 1h20v18H1zM5 4h12v12H5zM8 7h6M8 10h6M8 13h6" />
          </Icon>
        </ViewButton>
        <ViewButton aria-label="改ページ プレビュー">
          <Icon w={22} h={20} color={ink}>
            <path d="M1 1h20v18H1zM8 1v11M14 1v11M1 12h13" />
          </Icon>
        </ViewButton>
      </ViewButtons>
      <button aria-label="縮小">
        <Icon w={12} h={12}>
          <path d="M0 6h12" />
        </Icon>
      </button>
      <ZoomSlider type="range" aria-label="ズーム" min="0" max="200" defaultValue="100" />
      <button aria-label="拡大">
        <Icon w={12} h={12}>
          <path d="M0 6h12M6 0v12" />
        </Icon>
      </button>
      <ZoomValue>100%</ZoomValue>
    </StatusBar>
  </>
);

/* ---------- import dialog ---------- */

const Overlay = styled.div`
  position: fixed;
  inset: 0 8px 4px 0;
  display: flex;
  align-items: center;
  justify-content: center;
`;

const Dialog = styled.div`
  display: flex;
  flex-direction: column;
  width: 1318px;
  max-width: 96vw;
  padding: 10px 43px 31px;
  border: 2px solid #b2b2b2;
  border-radius: 14px;
  background: #fff;
  box-shadow: 0 36px 64px rgba(0, 0, 0, 0.22), 0 4px 32px rgba(0, 0, 0, 0.14);
  color: #444;
`;

const DialogControls = styled.div`
  display: flex;
  justify-content: flex-end;
  align-items: center;
  gap: 30px;
  height: 20px;
  margin-right: -30px;
`;

const DialogTitle = styled.h1`
  margin: 8px 0 4px;
  color: #217346;
  font-family: ${latin};
  font-size: 27px;
  font-weight: 300;
  line-height: 48px;
  white-space: pre;
`;

const OptionRow = styled.div`
  display: flex;
  align-items: flex-end;
  gap: 12px;
  font-feature-settings: normal;

  > button {
    margin: 0 5px 4px auto;
  }
`;

const Option = styled.label`
  flex: 0 1 333px;
  line-height: 29px;
`;

const SelectBox = styled.span`
  display: flex;
  position: relative;
  height: 33px;
  border: 2px solid ${(props) => (props.$active ? "#9bd4b7" : "#ababab")};
  background: ${(props) => (props.$active ? "#d3f0e0" : "#fff")};

  select {
    flex: 1;
    appearance: none;
    padding: 0 30px 0 7px;
    outline: 0;
    font-family: ${(props) => (props.$latin ? latin : jp)};
    font-size: ${(props) => (props.$latin ? 17 : 18)}px;
  }
  svg {
    position: absolute;
    top: 9px;
    right: 10px;
    pointer-events: none;
  }
`;

const Preview = styled.div`
  display: flex;
  margin-top: 12px;
  border: 2px solid #ababab;
  border-width: 2px 1px 2px 1px;
`;

const PreviewContent = styled.div`
  flex: 1;
`;

const PreviewTable = styled.table`
  width: 385px;
  table-layout: fixed;
  border-collapse: separate;
  border-spacing: 0;

  th,
  td {
    height: 31px;
    padding: 0 6px;
    border-right: 2px solid #d3d3d3;
    border-bottom: 2px solid #d3d3d3;
    font-size: 17px;
    font-weight: 400;
    line-height: 26px;
    text-align: left;
    white-space: nowrap;
  }
  tr:nth-child(even) td {
    height: 32px;
  }
  th {
    height: 32px;
    background: #f4f4f4;
    border-color: #e0e0e0;
    color: #333;
    font-size: 18px;
  }
  td:nth-child(n + 3) {
    font-family: ${latin};
    font-size: 16px;
    font-style: italic;
    text-align: right;
  }
  th:nth-child(2) {
    text-align: center;
    padding-right: 28px;
  }
`;

const Notice = styled.p`
  display: flex;
  align-items: center;
  gap: 7px;
  margin: 0;
  padding: 18px 0 10px 16px;
  font-feature-settings: normal;
  line-height: 23px;
`;

const PreviewScroll = styled.div`
  display: flex;
  flex-direction: column;
  align-items: center;
  gap: 12px;
  width: 26px;
  padding: 25px 2px;
  background: #f0f0f0;

  span {
    flex: 1;
    width: 100%;
    margin-bottom: 26px;
    background: #cdcdcd;
  }
`;

const DialogFooter = styled.div`
  display: flex;
  justify-content: flex-end;
  align-items: center;
  margin-top: 17px;
`;

const Highlight = styled.div`
  padding: 8px 13px;
  border: 5px solid #ee1c24;
`;

const SplitButton = styled.div`
  display: flex;
  height: 33px;
  border: 2px solid #217346;
  color: #217346;

  button {
    display: flex;
    align-items: center;
    justify-content: center;
    width: 75px;
    font-size: 16px;
    font-feature-settings: normal;
    line-height: 24px;
  }
  button + button {
    width: 26px;
    border-left: 2px solid #217346;
  }
`;

const PlainButton = styled.button`
  width: ${(props) => props.$width}px;
  height: 33px;
  margin-left: ${(props) => props.$gap}px;
  border: 2px solid #c6c6c6;
  background: #fff;
  font-size: 17px;
  line-height: 27px;
`;

const SmallTriangle = () => (
  <svg width="10" height="10" viewBox="0 0 10 10" aria-hidden="true">
    <path d="M0 2.500h10L5 8z" fill="#6a6a6a" />
  </svg>
);

const ThickChevron = ({ up }) => (
  <Icon w={18} h={14} color="#606060" sw={4}>
    <path d={up ? "M1 12l8-9 8 9" : "M1 2l8 9 8-9"} />
  </Icon>
);

const options = [
  { label: "元のファイル", value: "65001: Unicode (UTF-8)", active: true },
  { label: "区切り記号", value: "コンマ" },
  { label: "データ型検出", value: "最初の 200 行に基づく" },
];

const ImportDialog = () => (
  <Overlay>
    <Dialog role="dialog" aria-label="sample_data .csv">
      <DialogControls>
        <button aria-label="最大化">
          <Icon w={18} h={18} color="#777">
            <rect x="1" y="1" width="15" height="15" />
          </Icon>
        </button>
        <button aria-label="閉じる">
          <CrossIcon size={18} color="#777" />
        </button>
      </DialogControls>
      <DialogTitle>sample_data  .csv</DialogTitle>
      <OptionRow>
        {options.map((option) => (
          <Option key={option.label}>
            {option.label}
            <SelectBox $active={option.active} $latin={option.active}>
              <select defaultValue={option.value}>
                <option>{option.value}</option>
              </select>
              <SmallTriangle />
            </SelectBox>
          </Option>
        ))}
        <button aria-label="更新">
          <RefreshFileIcon />
        </button>
      </OptionRow>
      <Preview>
        <PreviewContent>
          <PreviewTable>
            <colgroup>
              <col width="97" />
              <col width="140" />
              <col width="74" />
              <col width="74" />
            </colgroup>
            <thead>
              <tr>
                <th>顧客名</th>
                <th>商材</th>
                <th>数量</th>
                <th>価格</th>
              </tr>
            </thead>
            <tbody>
              {previewRows.map((row, i) => (
                <tr key={i}>
                  {row.map((value, j) => (
                    <td key={j}>{value}</td>
                  ))}
                </tr>
              ))}
            </tbody>
          </PreviewTable>
          <Notice>
            <svg width="22" height="22" viewBox="0 0 22 22" aria-hidden="true">
              <circle cx="11" cy="11" r="11" fill="#4a7ebb" />
              <path d="M9.500 4h3v3h-3zM9.500 9h3v9h-3z" fill="#fff" />
            </svg>
            サイズ制限よりプレビュー内のデータが切り詰められています。
          </Notice>
        </PreviewContent>
        <PreviewScroll>
          <ThickChevron up />
          <span />
          <ThickChevron />
        </PreviewScroll>
      </Preview>
      <DialogFooter>
        <Highlight>
          <SplitButton>
            <button>読み込み</button>
            <button aria-label="読み込みオプション">
              <SmallTriangle />
            </button>
          </SplitButton>
        </Highlight>
        <PlainButton $width={124} $gap={2}>
          データの変換
        </PlainButton>
        <PlainButton $width={109} $gap={20}>
          キャンセル
        </PlainButton>
      </DialogFooter>
    </Dialog>
  </Overlay>
);

const App = () => (
  <>
    <GlobalStyle />
    <Window>
      <TitleBarView />
      <TabRowView />
      <RibbonView />
      <FormulaBarView />
      <SheetView />
      <BottomView />
    </Window>
    <ImportDialog />
  </>
);

export default App;
